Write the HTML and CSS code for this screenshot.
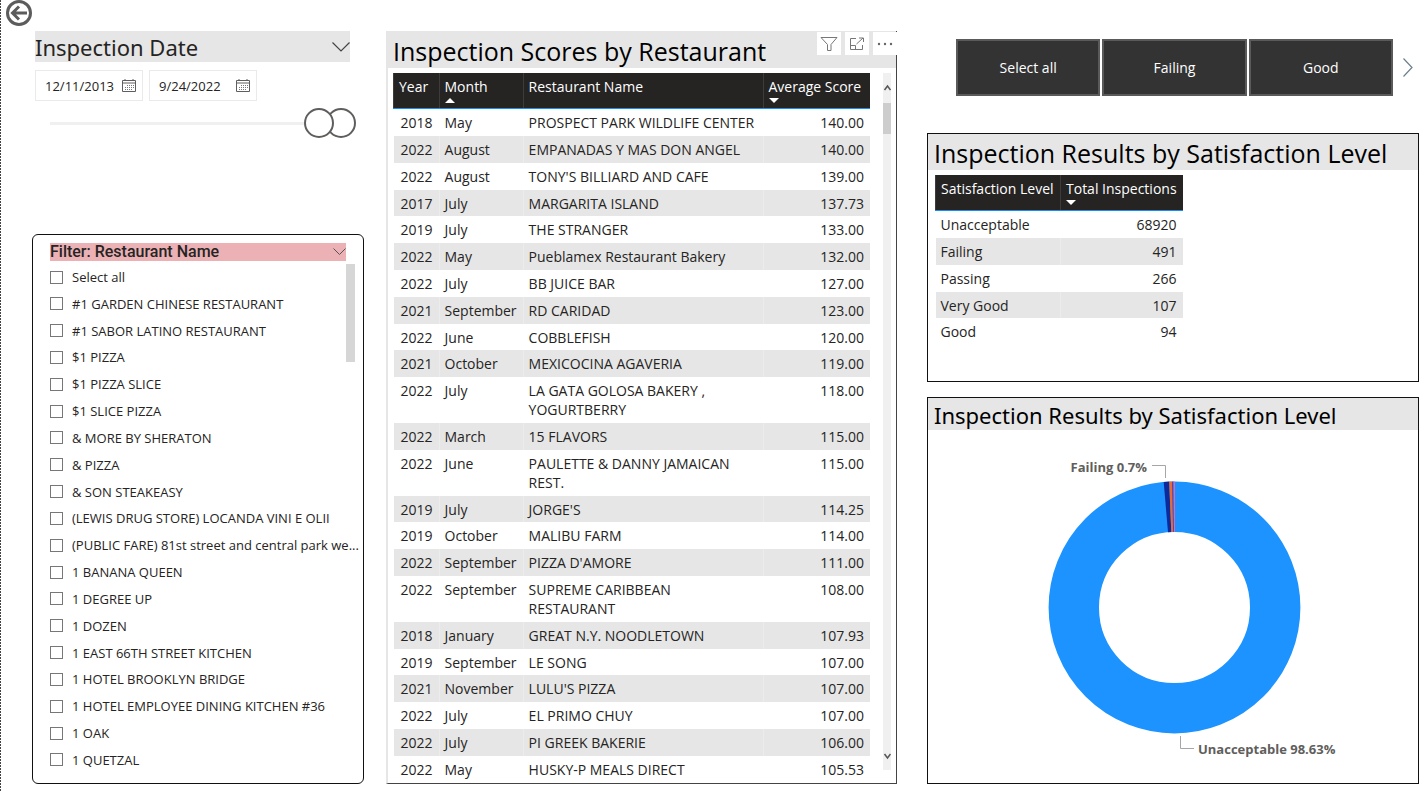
FILE: index.html
```html
<!DOCTYPE html>
<html lang="en">
<head>
<meta charset="utf-8">
<title>Restaurant Inspections</title>
<link rel="stylesheet" href="styles.css">
</head>
<body>
<header class="topbar">
  <button class="back" aria-label="Back">
    <svg width="26" height="26" viewBox="0 0 26 26" fill="none" stroke="#5c5c5c"><circle cx="13" cy="13" r="11.5" stroke-width="3"/><path d="M21 13H7M13 6.5L6.5 13L13 19.5" stroke-width="3"/></svg>
  </button>
</header>
<main class="report">
  <div class="col-left">
    <section class="slicer">
      <h2 class="slicer-title">Inspection Date
        <svg width="18" height="10" viewBox="0 0 18 10" fill="none" stroke="#444" stroke-width="1.200"><path d="M.5 .5L9 9L17.500 .5"/></svg>
      </h2>
      <div class="dates">
        <label class="date"><input type="text" value="12/11/2013" aria-label="Start date">
          <svg width="14" height="13" viewBox="0 0 14 13"><path d="M.5 1.500h13v11H.5zM.5 4h13M3 0v2M11 0v2" fill="none" stroke="#605e5c"/><path d="M5 6.500h7M3 8.500h9M3 10.500h7" stroke="#777" stroke-dasharray="1 1"/></svg></label>
        <label class="date"><input type="text" value="9/24/2022" aria-label="End date">
          <svg width="14" height="13" viewBox="0 0 14 13"><path d="M.5 1.500h13v11H.5zM.5 4h13M3 0v2M11 0v2" fill="none" stroke="#605e5c"/><path d="M5 6.500h7M3 8.500h9M3 10.500h7" stroke="#777" stroke-dasharray="1 1"/></svg></label>
      </div>
      <div class="range">
        <input type="range" min="0" max="100" value="100" aria-label="Range end">
        <input type="range" min="0" max="100" value="92" aria-label="Range start">
      </div>
    </section>
    <section class="filter">
      <h2 class="filter-title">Filter: Restaurant Name
        <svg width="13" height="8" viewBox="0 0 13 8" fill="none" stroke="#555"><path d="M.5 .5L6.500 6.500L12.500 .5"/></svg>
      </h2>
      <div class="filter-body">
        <div class="options">
          <label><input type="checkbox"><span>Select all</span></label>
          <label><input type="checkbox"><span>#1 GARDEN CHINESE RESTAURANT</span></label>
          <label><input type="checkbox"><span>#1 SABOR LATINO RESTAURANT</span></label>
          <label><input type="checkbox"><span>$1 PIZZA</span></label>
          <label><input type="checkbox"><span>$1 PIZZA SLICE</span></label>
          <label><input type="checkbox"><span>$1 SLICE PIZZA</span></label>
          <label><input type="checkbox"><span>&amp; MORE BY SHERATON</span></label>
          <label><input type="checkbox"><span>&amp; PIZZA</span></label>
          <label><input type="checkbox"><span>&amp; SON STEAKEASY</span></label>
          <label><input type="checkbox"><span>(LEWIS DRUG STORE) LOCANDA VINI E OLII</span></label>
          <label><input type="checkbox"><span>(PUBLIC FARE) 81st street and central park we...</span></label>
          <label><input type="checkbox"><span>1 BANANA QUEEN</span></label>
          <label><input type="checkbox"><span>1 DEGREE UP</span></label>
          <label><input type="checkbox"><span>1 DOZEN</span></label>
          <label><input type="checkbox"><span>1 EAST 66TH STREET KITCHEN</span></label>
          <label><input type="checkbox"><span>1 HOTEL BROOKLYN BRIDGE</span></label>
          <label><input type="checkbox"><span>1 HOTEL EMPLOYEE DINING KITCHEN #36</span></label>
          <label><input type="checkbox"><span>1 OAK</span></label>
          <label><input type="checkbox"><span>1 QUETZAL</span></label>
        </div>
        <div class="filter-thumb"></div>
      </div>
    </section>
  </div>

  <section class="scores">
    <div class="scores-head">
      <h2 class="title title-scores">Inspection Scores by Restaurant</h2>
      <div class="tools">
        <button aria-label="Filters"><svg width="18" height="16" viewBox="0 0 18 16" fill="none" stroke="#777"><path d="M1 1.500H17L11 8.500V14.500H7.500V8.500Z"/></svg></button>
        <button aria-label="Focus mode"><svg width="16" height="14" viewBox="0 0 16 14" fill="none" stroke="#777"><path d="M7 1.500H1.500V12.500H13.500V8M1.500 8.500H6.500V12.500M7.500 7L14 1M10 1H14.500V5"/></svg></button>
        <button aria-label="More options"><svg width="16" height="4" viewBox="0 0 16 4" fill="#666"><circle cx="2" cy="2" r="1.200"/><circle cx="8" cy="2" r="1.200"/><circle cx="14" cy="2" r="1.200"/></svg></button>
      </div>
    </div>
    <div class="scores-body">
      <table class="grid">
        <colgroup><col class="c-year"><col class="c-month"><col class="c-name"><col class="c-score"></colgroup>
        <thead><tr><th>Year</th><th>Month<i class="up"></i></th><th>Restaurant Name</th><th>Average Score<i class="down"></i></th></tr></thead>
        <tbody>
          <tr><td>2018</td><td>May</td><td>PROSPECT PARK WILDLIFE CENTER</td><td>140.00</td></tr>
          <tr><td>2022</td><td>August</td><td>EMPANADAS Y MAS DON ANGEL</td><td>140.00</td></tr>
          <tr><td>2022</td><td>August</td><td>TONY'S BILLIARD AND CAFE</td><td>139.00</td></tr>
          <tr><td>2017</td><td>July</td><td>MARGARITA ISLAND</td><td>137.73</td></tr>
          <tr><td>2019</td><td>July</td><td>THE STRANGER</td><td>133.00</td></tr>
          <tr><td>2022</td><td>May</td><td>Pueblamex Restaurant Bakery</td><td>132.00</td></tr>
          <tr><td>2022</td><td>July</td><td>BB JUICE BAR</td><td>127.00</td></tr>
          <tr><td>2021</td><td>September</td><td>RD CARIDAD</td><td>123.00</td></tr>
          <tr><td>2022</td><td>June</td><td>COBBLEFISH</td><td>120.00</td></tr>
          <tr><td>2021</td><td>October</td><td>MEXICOCINA AGAVERIA</td><td>119.00</td></tr>
          <tr><td>2022</td><td>July</td><td>LA GATA GOLOSA BAKERY , YOGURTBERRY</td><td>118.00</td></tr>
          <tr><td>2022</td><td>March</td><td>15 FLAVORS</td><td>115.00</td></tr>
          <tr><td>2022</td><td>June</td><td>PAULETTE &amp; DANNY JAMAICAN REST.</td><td>115.00</td></tr>
          <tr><td>2019</td><td>July</td><td>JORGE'S</td><td>114.25</td></tr>
          <tr><td>2019</td><td>October</td><td>MALIBU FARM</td><td>114.00</td></tr>
          <tr><td>2022</td><td>September</td><td>PIZZA D'AMORE</td><td>111.00</td></tr>
          <tr><td>2022</td><td>September</td><td>SUPREME CARIBBEAN RESTAURANT</td><td>108.00</td></tr>
          <tr><td>2018</td><td>January</td><td>GREAT N.Y. NOODLETOWN</td><td>107.93</td></tr>
          <tr><td>2019</td><td>September</td><td>LE SONG</td><td>107.00</td></tr>
          <tr><td>2021</td><td>November</td><td>LULU'S PIZZA</td><td>107.00</td></tr>
          <tr><td>2022</td><td>July</td><td>EL PRIMO CHUY</td><td>107.00</td></tr>
          <tr><td>2022</td><td>July</td><td>PI GREEK BAKERIE</td><td>106.00</td></tr>
          <tr><td>2022</td><td>May</td><td>HUSKY-P MEALS DIRECT</td><td>105.53</td></tr>
        </tbody>
      </table>
      <div class="scrollbar">
        <svg width="8" height="30" viewBox="0 0 8 30" fill="none" stroke="#555" stroke-width="1.500"><path d="M1.500 17L4.500 13L7.500 17"/></svg>
        <div class="scroll-thumb"></div>
        <svg class="scroll-end" width="8" height="20" viewBox="0 0 8 20" fill="none" stroke="#555" stroke-width="1.500"><path d="M1.500 4L4.500 8L7.500 4"/></svg>
      </div>
    </div>
  </section>

  <div class="col-right">
    <div class="levels">
      <button class="level">Select all</button>
      <button class="level">Failing</button>
      <button class="level">Good</button>
      <button class="next" aria-label="Next"><svg width="10" height="19" viewBox="0 0 10 19" fill="none" stroke="#6b7f8c" stroke-width="1.200"><path d="M.5 .5L9 9.500L.5 18.500"/></svg></button>
    </div>
    <section class="card summary">
      <h2 class="title title-summary">Inspection Results by Satisfaction Level</h2>
      <table class="grid summary-grid">
        <colgroup><col class="c-level"><col class="c-total"></colgroup>
        <thead><tr><th>Satisfaction Level</th><th>Total Inspections<i class="down"></i></th></tr></thead>
        <tbody>
          <tr><td>Unacceptable</td><td>68920</td></tr>
          <tr><td>Failing</td><td>491</td></tr>
          <tr><td>Passing</td><td>266</td></tr>
          <tr><td>Very Good</td><td>107</td></tr>
          <tr><td>Good</td><td>94</td></tr>
        </tbody>
      </table>
    </section>
    <section class="card donut">
      <h2 class="title title-donut">Inspection Results by Satisfaction Level</h2>
      <svg class="chart" viewBox="0 0 490 353">
        <g transform="translate(246.5 177.500)">
          <circle r="100.700" fill="none" stroke="#1c93ff" stroke-width="50.400"/>
          <path d="M-10.800 -125.500L-5.300 -125.900L-3.200 -75.400L-6.500 -75.200Z" fill="#0d2a9b"/>
          <path d="M-5.300 -125.900H-2.300L-1.400 -75.500L-3.200 -75.400Z" fill="#e66c37"/>
          <path d="M-2.300 -126H-1L-.6 -75.500H-1.400Z" fill="#6b2a8b"/>
          <path d="M-1 -126H.3V-75.500H-.6Z" fill="#d873c0"/>
        </g>
        <path d="M224 35.500H237.500V48M252.500 306V318.500H266" fill="none" stroke="#a6a6a6"/>
        <text class="label" x="219" y="42" text-anchor="end">Failing 0.7%</text>
        <text class="label" x="270" y="324">Unacceptable 98.63%</text>
      </svg>
    </section>
  </div>
</main>
</body>
</html>
```

FILE: styles.css
```css
* { box-sizing: border-box; }

body {
  margin: 0;
  padding: 0 8px 5px 32px;
  min-height: 100vh;
  font-family: "Open Sans", "Noto Sans", sans-serif;
  font-size: 14px;
  color: #252423;
  background: repeating-linear-gradient(#444 0 2px, transparent 2px 3px) left top / 1px 100% no-repeat #fff;
}

h2 { margin: 0; font-weight: 400; white-space: nowrap; }
button, input { font: inherit; color: inherit; }
button { padding: 0; border: 0; background: none; }
svg { display: block; flex: none; }

.topbar { height: 31px; }
.back { margin-left: -26px; }

.report {
  display: grid;
  grid-template-columns: 332fr 511fr 500fr;
  column-gap: 22px;
}

.col-left, .col-right { display: flex; flex-direction: column; min-width: 0; }

/* date slicer */
.slicer { height: 203px; padding: 0 14px 0 3px; }
.slicer-title {
  display: flex;
  align-items: center;
  justify-content: space-between;
  height: 31px;
  font: 400 22px "Noto Sans", sans-serif;
  background: #e6e6e6;
}
.dates { display: flex; gap: 6px; margin-top: 8px; }
.date {
  display: flex;
  align-items: center;
  width: 108px;
  height: 31px;
  padding: 0 6px 0 9px;
  border: 1px solid #eaeaea;
}
.date input { flex: 1; min-width: 0; padding: 0; border: 0; outline: 0; font-size: 13px; }
.range { display: grid; margin: 7px -6px 0 15px; }
.range input {
  grid-area: 1 / 1;
  width: 100%;
  height: 30px;
  margin: 0;
  appearance: none;
  background: linear-gradient(#f0f0f0, #f0f0f0) left center / 90% 3px no-repeat;
}
.range input::-webkit-slider-thumb {
  appearance: none;
  width: 30px;
  height: 30px;
  border: 2px solid #605e5c;
  border-radius: 50%;
  background: #fff;
}

/* restaurant filter */
.filter {
  flex: 1;
  display: flex;
  flex-direction: column;
  padding: 8px 8px 10px 17px;
  border: 1px solid #111;
  border-radius: 6px;
}
.filter-title {
  display: flex;
  align-items: center;
  justify-content: space-between;
  height: 18px;
  margin-right: 9px;
  font: 500 16px/18px Roboto, sans-serif;
  background: #ebb1b5;
}
.filter-body { flex: 1; display: flex; padding-top: 3px; }
.options { flex: 1; min-width: 0; display: flex; flex-direction: column; justify-content: space-between; }
.options label { display: flex; align-items: center; gap: 9px; height: 26px; font-size: 13px; white-space: nowrap; }
.options span { width: 0; }
.options input {
  appearance: none;
  flex: none;
  width: 13px;
  height: 13px;
  margin: 0;
  border: 1px solid #777;
  background: #fff;
}
.filter-thumb { width: 9px; height: 98px; background: #d6d6d6; }

/* titles */
.title { padding-left: 6px; color: #000; background: #e6e6e6; }
.title-scores { height: 37px; font-size: 25px; line-height: 40px; }
.title-summary { height: 36px; font-size: 25px; line-height: 39px; }
.title-donut { height: 32px; font: 400 22px/35px "Noto Sans", sans-serif; }

/* scores */
.scores {
  border-left: 2px solid #e6e6e6;
  border-right: 1px solid #444;
  border-bottom: 1px solid #444;
}
.scores-head { position: relative; }
.scores-head .title { padding-left: 5px; }
.tools { position: absolute; top: 1px; right: -1px; display: flex; gap: 4px; }
.tools button { display: grid; place-items: center; width: 24px; height: 23px; background: #fff; }
.scores-body { display: flex; padding: 5px 5px 0 5px; }

.grid { flex: 1; table-layout: fixed; border-collapse: collapse; }
.c-year { width: 44px; }
.c-month { width: 84px; }
.c-score { width: 107px; }
.grid th {
  position: relative;
  height: 35px;
  padding: 4px 0 0 5px;
  font-weight: 400;
  line-height: 19px;
  text-align: left;
  vertical-align: top;
  white-space: nowrap;
  color: #fff;
  background: #252423;
  border-left: 1px solid #3d3c3b;
  border-bottom: 1px solid #118dff;
}
.grid td { padding: 4px 6px 4px 5px; line-height: 19px; vertical-align: top; }
.grid td + td { border-left: 1px solid #ececec; }
.grid tr:nth-child(odd) td { border-color: #fff; }
.grid tr:nth-child(5n + 4) td { padding-bottom: 3px; }
.grid td:last-child { text-align: right; }
.grid td:nth-child(3) { padding-right: 5px; }
.grid td:first-child:nth-last-child(4) { padding-left: 7px; }
.grid tbody tr:nth-child(even) { background: #e6e6e6; }
.up, .down {
  position: absolute;
  left: 5px;
  bottom: 5px;
  border: 5px solid transparent;
  border-top-width: 0;
  border-bottom-color: #fff;
}
.down { border-top: 5px solid #fff; border-bottom-width: 0; }

.scrollbar { display: flex; flex-direction: column; width: 8px; margin: 0 0 13px 13px; background: #f0f0f0; }
.scroll-thumb { height: 31px; background: #cdcdcd; }
.scroll-end { margin-top: auto; }

/* right column */
.col-right { padding-left: 8px; }
.levels { display: flex; gap: 2px; align-items: center; height: 57px; margin: 8px 6px 37px 29px; }
.level { flex: 1; height: 100%; color: #fff; background: #333; border: 2px solid #5a5a5a; }
.next { padding-left: 8px; }
.card { border: 1px solid #111; }
.summary { min-height: 249px; margin-bottom: 15px; }
.summary-grid { width: 247px; margin: 5px 0 0 7px; }
.c-level { width: 125px; }
.c-total { width: 122px; }
.donut { flex: 1; }
.chart { width: 100%; }
.label { font: 700 13px "Open Sans", sans-serif; fill: #605e5c; }
```
